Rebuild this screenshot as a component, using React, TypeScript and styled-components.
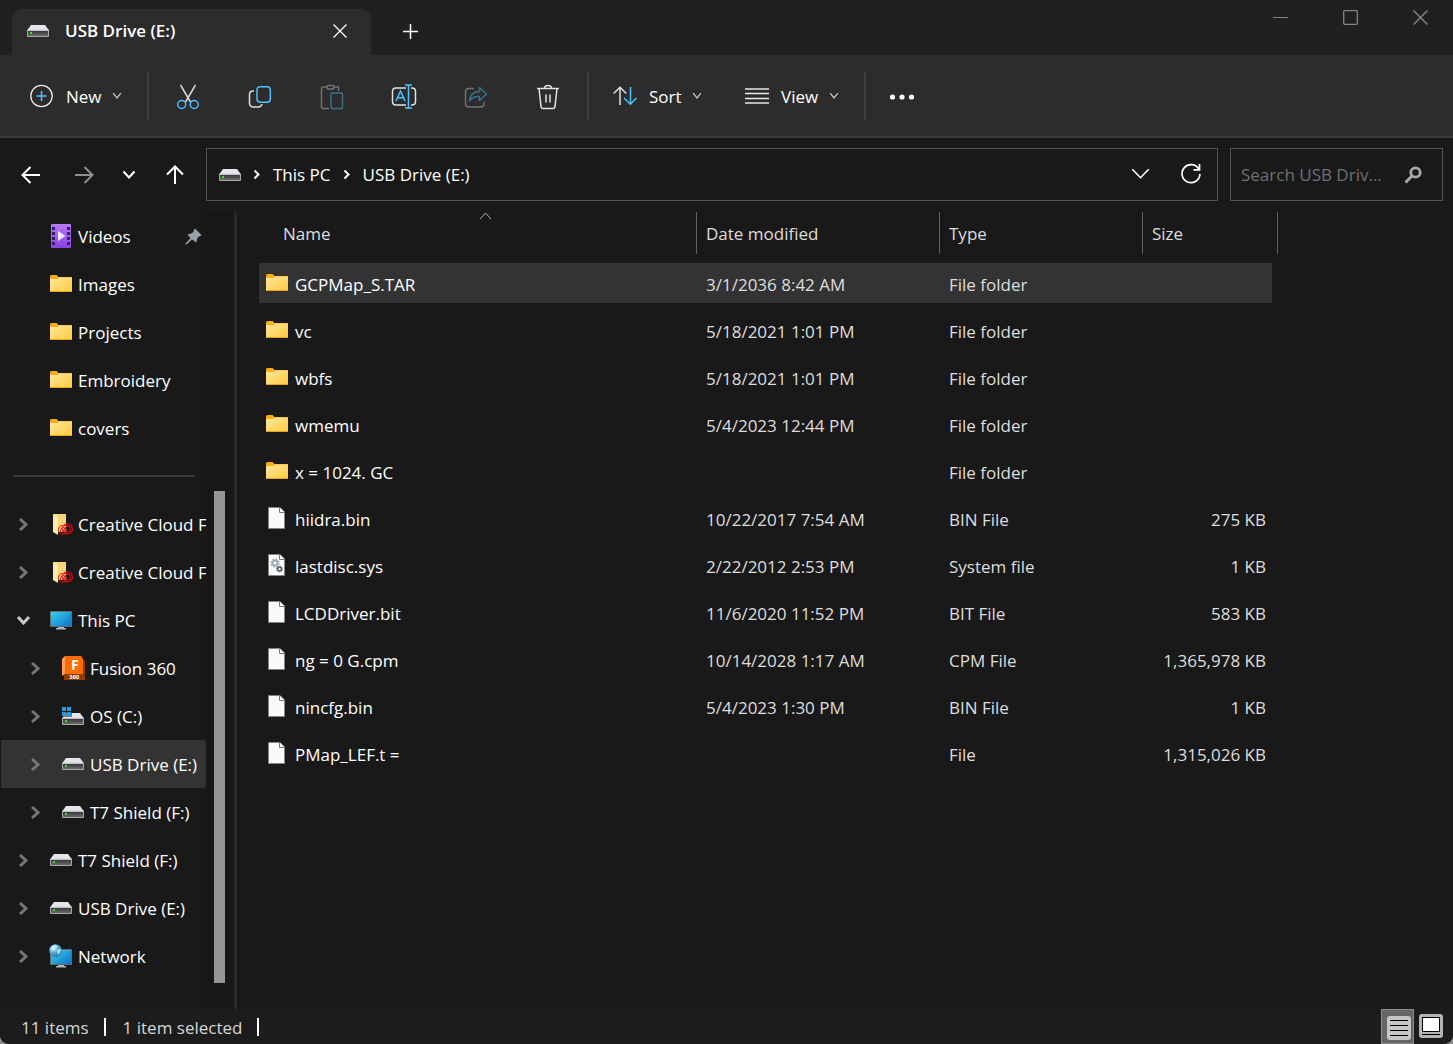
import React from "react";
import styled, { createGlobalStyle } from "styled-components";

const GlobalStyle = createGlobalStyle`
  *, *::before, *::after { box-sizing: border-box; }
  body {
    margin: 0;
    background: #8a8a8a;
    color: #ffffff;
    font: 400 17px/24px "Open Sans", "Noto Sans", sans-serif;
  }
  button, input { font: inherit; color: inherit; }
  button { border: 0; padding: 0; background: none; cursor: pointer; }
  svg { display: block; flex: none; }
`;

/* ---------- window frame ---------- */

const Window = styled.div`
  display: flex;
  flex-direction: column;
  min-height: 100vh;
  background: #191919;
  border-radius: 0 0 9px 9px;
  overflow: hidden;
`;

const TitleBar = styled.header`
  display: flex;
  align-items: flex-end;
  height: 55px;
  padding-left: 12px;
  background: #202020;
`;

const Tab = styled.div`
  display: flex;
  align-items: center;
  width: 359px;
  height: 46px;
  padding: 0 16px 2px 14px;
  gap: 15px;
  border-radius: 10px 10px 0 0;
  background: #2c2c2c;
`;

const TabTitle = styled.span`
  flex: 1;
  font-weight: 600;
`;

const TabButton = styled.button`
  display: grid;
  place-items: center;
  width: 30px;
  height: 30px;
`;

const NewTabButton = styled(TabButton)`
  width: 46px;
  height: 48px;
  margin-left: 16px;
`;

const WindowControls = styled.div`
  display: flex;
  align-self: flex-start;
  gap: 6px;
  margin-left: auto;
  padding-right: 1px;
  color: #848484;
`;

const ControlButton = styled.button`
  display: grid;
  place-items: center;
  width: 64px;
  height: 35px;
`;

/* ---------- command bar ---------- */

const Toolbar = styled.div`
  display: flex;
  align-items: center;
  height: 83px;
  padding-left: 30px;
  background: #2c2c2c;
  border-bottom: 2px solid #3c3c3c;
`;

const LabelButton = styled.button<{ $width: number }>`
  display: flex;
  align-items: center;
  justify-content: space-between;
  width: ${(p) => p.$width}px;
  height: 48px;
`;

const ButtonLabel = styled.span`
  flex: 1;
  padding: 2px 0 0 12px;
  text-align: left;
`;

const IconGroup = styled.div`
  display: flex;
  gap: 24px;
`;

const IconButton = styled.button`
  display: grid;
  place-items: center;
  width: 48px;
  height: 48px;
  padding-top: 2px;
  &:disabled { opacity: 0.45; cursor: default; }
`;

const Divider = styled.div<{ $before: number; $after: number }>`
  width: 2px;
  height: 48px;
  margin: 0 ${(p) => p.$after}px 0 ${(p) => p.$before}px;
  background: #3e3e3e;
`;

const ViewSlot = styled.div`
  margin-left: 43px;
`;

/* ---------- navigation row ---------- */

const NavBar = styled.nav`
  display: flex;
  padding: 10px 10px 11px 4px;
`;

const NavButtons = styled.div`
  display: grid;
  grid-template-columns: 53px 53px 37px 59px;
`;

const NavButton = styled.button`
  display: grid;
  place-items: center;
  height: 53px;
  &:disabled { color: #8f8f8f; }
  &:last-child { padding-right: 3px; }
`;

const AddressBar = styled.div`
  display: flex;
  align-items: center;
  flex: 1;
  height: 53px;
  padding: 0 3px 0 11px;
  border: 1px solid #535353;
`;

const Crumbs = styled.ol`
  display: flex;
  align-items: center;
  flex: 1;
  margin: 0;
  padding: 0 0 0 11px;
  list-style: none;
`;

const Crumb = styled.li`
  display: flex;
  align-items: center;
  gap: 13px;
  margin-right: 12px;
`;

const CrumbLink = styled.a`
  color: inherit;
  text-decoration: none;
`;

const AddressButton = styled.button`
  display: grid;
  place-items: center;
  width: 46px;
  height: 48px;
  margin-left: 5px;
  padding-bottom: 2px;
`;

const SearchBox = styled.label`
  display: flex;
  align-items: center;
  width: 213px;
  height: 53px;
  margin-left: 12px;
  padding: 0 20px 0 10px;
  border: 1px solid #535353;
`;

const SearchInput = styled.input`
  flex: 1;
  min-width: 0;
  padding: 0;
  border: 0;
  outline: 0;
  background: none;
  &::placeholder { color: #707070; opacity: 1; }
`;

/* ---------- body ---------- */

const Body = styled.div`
  display: flex;
  flex: 1;
`;

const Sidebar = styled.aside`
  display: flex;
  width: 237px;
  border-right: 3px solid #292929;
`;

const Tree = styled.ul`
  width: 206px;
  margin: 0;
  padding: 0 0 0 1px;
  list-style: none;
  overflow: hidden;
`;

const TreeRow = styled.button<{ $depth: number; $selected?: boolean }>`
  display: flex;
  align-items: center;
  width: 100%;
  height: 48px;
  padding: 0 4px 0 ${(p) => 10 + p.$depth * 12}px;
  background: ${(p) => (p.$selected ? "#333333" : "transparent")};
  border-radius: 2px;
  text-align: left;
  white-space: nowrap;
`;

const ExpanderSlot = styled.span`
  display: grid;
  flex: none;
  place-items: center;
  width: 24px;
  margin-right: 14px;
  color: #767676;
`;

const TreeIcon = styled.span`
  display: grid;
  flex: none;
  place-items: center;
  width: 24px;
  margin-right: 5px;
`;

const TreeLabel = styled.span`
  flex: 1;
  padding-top: 2px;
`;

const TreeDivider = styled.li`
  display: flex;
  align-items: center;
  height: 48px;
  padding: 0 11px 0 12px;
  &::before { content: ""; flex: 1; height: 2px; background: #3a3a3a; }
`;

const ScrollTrack = styled.div`
  display: grid;
  grid-template-rows: 279fr 492fr 26fr;
  width: 28px;
  padding-left: 8px;
  background: #171717;
`;

const ScrollThumb = styled.div`
  grid-row: 2;
  width: 11px;
  background: #959595;
`;

const Content = styled.main`
  flex: 1;
  min-width: 0;
  padding-left: 22px;
  overflow-x: auto;
`;

const FileTable = styled.table`
  width: 1019px;
  table-layout: fixed;
  border-collapse: separate;
  border-spacing: 0;
  color: #dedede;
`;

const HeadCell = styled.th`
  height: 48px;
  padding: 0;
  font-weight: 400;
  text-align: left;
  vertical-align: top;
`;

const HeadButton = styled.button<{ $indent: number }>`
  position: relative;
  display: flex;
  align-items: center;
  width: 100%;
  height: 42px;
  padding: 2px 0 0 ${(p) => p.$indent}px;
  border-right: 1px solid #636363;
`;

const SortMark = styled.span`
  position: absolute;
  top: 0;
  left: 220px;
`;

const Row = styled.tr<{ $selected?: boolean }>`
  & > td {
    background-color: ${(p) => (p.$selected ? "#333333" : "transparent")};
  }
`;

const Cell = styled.td`
  height: 47px;
  padding: 3px 0 0 9px;
  border: 0 solid transparent;
  border-width: 3px 0 4px;
  background-clip: padding-box;
  white-space: nowrap;
`;

const NameCell = styled(Cell)`
  padding: 0 0 0 6px;
  color: #ffffff;
`;

const SizeCell = styled(Cell)`
  border-right-width: 12px;
  border-right-width: 6px;
  padding-right: 6px;
  text-align: right;
`;

const FileEntryLine = styled.span`
  display: flex;
  align-items: center;
  gap: 6px;
`;

const FileName = styled.span`
  padding-top: 3px;
`;

/* ---------- status bar ---------- */

const StatusBar = styled.footer`
  display: flex;
  align-items: center;
  height: 35px;
  padding: 0 10px 0 21px;
  background: #1c1c1c;
  color: #d6d6d6;
`;

const StatusText = styled.span`
  position: relative;
  margin-right: 19px;
  padding: 2px 15px 0 0;
  &::after {
    content: "";
    position: absolute;
    right: -2px;
    top: 4px;
    width: 2px;
    height: 18px;
    background: #ffffff;
  }
`;

const ViewModes = styled.div`
  display: flex;
  align-items: center;
  gap: 5px;
  margin-left: auto;
`;

const ModeButton = styled.button<{ $active?: boolean }>`
  display: grid;
  place-items: center;
  width: ${(p) => (p.$active ? 33 : 24)}px;
  height: 35px;
  padding: ${(p) => (p.$active ? "2px 0 0 2px" : "0 0 2px")};
  background: ${(p) => (p.$active ? "#666666" : "none")};
  border: ${(p) => (p.$active ? "1px solid #8c8c8c" : "0")};
`;

/* ---------- icons ---------- */

const BLUE = "#4cc2ff";

type ChevronProps = { dir: "down" | "right" | "up"; w: number; h: number; stroke?: number; color?: string };
const Chevron = ({ dir, w, h, stroke = 2, color = "currentColor" }: ChevronProps) => {
  const s = stroke / 2 + 0.5;
  const d =
    dir === "down"
      ? `M${s} ${s}L${w / 2} ${h - s}L${w - s} ${s}`
      : dir === "up"
      ? `M${s} ${h - s}L${w / 2} ${s}L${w - s} ${h - s}`
      : `M${s} ${s}L${w - s} ${h / 2}L${s} ${h - s}`;
  return (
    <svg width={w} height={h} viewBox={`0 0 ${w} ${h}`} fill="none" stroke={color} strokeWidth={stroke}>
      <path d={d} />
    </svg>
  );
};

const DriveIcon = ({ os = false }: { os?: boolean }) => (
  <svg width="24" height={os ? 19 : 14} viewBox={os ? "0 -5 24 19" : "0 0 24 14"}>
    <defs>
      <linearGradient id="driveFront" x1="0" y1="0" x2="0" y2="1">
        <stop offset="0" stopColor="#333" />
        <stop offset="1" stopColor="#707070" />
      </linearGradient>
    </defs>
    <path d="M5 1H19L23 6.5H1Z" fill="#e6e6ea" />
    <path d="M1.5 6.5H22.5V12.5H1.5Z" fill="url(#driveFront)" stroke="#a8a8a8" />
    <path d="M1 6.3H23" stroke="#c8c8cc" />
    <path d="M4 8H6V10H4Z" fill="#2ee62e" />
    {os && (
      <>
        <path d="M0 -5H11V5H0Z" fill="#191919" opacity=".5" />
        <path d="M1 -5H5V-1H1ZM6 -5H10V-1H6ZM1 0H5V4H1ZM6 0H10V4H6Z" fill="#1c9be6" />
      </>
    )}
  </svg>
);

const FolderIcon = () => (
  <svg width="24" height="18" viewBox="0 0 24 18">
    <defs>
      <linearGradient id="folderFace" x1="0" y1="0" x2="1" y2="1">
        <stop offset="0" stopColor="#ffe9a2" />
        <stop offset="1" stopColor="#ffc83a" />
      </linearGradient>
    </defs>
    <path d="M1 1.5Q1 0 2.500 0H7.500L9.500 2H23V8H1Z" fill="#fbb012" />
    <path d="M1 4H8L10 2.500H23V17H1Z" fill="url(#folderFace)" />
    <path d="M1 16.500H23" stroke="#e9a21c" />
  </svg>
);

const FileIcon = ({ gears = false }: { gears?: boolean }) => (
  <svg width="24" height="24" viewBox="0 0 24 24">
    <path d="M3.500 1.500H15L19.500 6V22.500H3.500Z" fill="#fafafa" stroke="#858585" />
    <path d="M14.500 1.500V6.500H19.500" fill="#fff" stroke="#777" />
    {gears && (
      <g fill="none">
        <circle cx="10" cy="10" r="2.500" stroke="#a2abb4" strokeWidth="2" />
        <circle cx="10" cy="10" r="4" stroke="#a2abb4" strokeWidth="1.500" strokeDasharray="1.600 1.540" />
        <circle cx="14.500" cy="16" r="2" stroke="#4d555c" strokeWidth="1.500" />
        <circle cx="14.500" cy="16" r="3" stroke="#6a737b" strokeDasharray="1.200 1.150" />
      </g>
    )}
  </svg>
);

const VideosIcon = () => (
  <svg width="20" height="24" viewBox="0 0 20 24">
    <defs>
      <linearGradient id="videoFace" x1="0" y1="0" x2="0" y2="1">
        <stop offset="0" stopColor="#b57bf5" />
        <stop offset="1" stopColor="#8a42e0" />
      </linearGradient>
      <linearGradient id="videoPlay" x1="0" y1="0" x2="1" y2="1">
        <stop offset="0" stopColor="#fff" />
        <stop offset="1" stopColor="#dcc8f5" />
      </linearGradient>
    </defs>
    <rect width="20" height="24" rx="1" fill="url(#videoFace)" />
    <path d="M1 3h3v3H1zM1 8h3v3H1zM1 13h3v3H1zM1 18h3v3H1zM16 3h3v3h-3zM16 8h3v3h-3zM16 13h3v3h-3zM16 18h3v3h-3z" fill="#3b1a66" />
    <path d="M7 7L14.500 12L7 17Z" fill="url(#videoPlay)" />
  </svg>
);

const CloudFolderIcon = () => (
  <svg width="24" height="24" viewBox="0 0 24 24">
    <path d="M4 2H17V20H7Z" fill="#f7d477" />
    <path d="M4 2L9 5V23L4 20Z" fill="#ffe9ab" />
    <g fill="none" stroke="#d01212">
      <rect x="9.500" y="13.500" width="14" height="8.500" rx="4.200" />
      <circle cx="18.500" cy="16.500" r="5" />
      <circle cx="18.500" cy="17" r="2.800" />
      <path d="M11.500 20Q11.500 15.500 14.500 15.500Q17.500 16 18.500 20M13.500 21Q13 18 15 18L17 21" />
    </g>
  </svg>
);

const MonitorIcon = ({ globe = false }: { globe?: boolean }) => (
  <svg width="24" height={globe ? 24 : 20} viewBox={globe ? "0 -4 24 24" : "0 0 24 20"}>
    <defs>
      <linearGradient id="screenFace" x1="0" y1="0" x2="1" y2="1">
        <stop offset="0" stopColor="#39d5e6" />
        <stop offset="1" stopColor="#0d6fcb" />
      </linearGradient>
      <radialGradient id="globeFace" cx=".35" cy=".3" r=".8">
        <stop offset="0" stopColor="#c8ecfa" />
        <stop offset=".5" stopColor="#58a9d4" />
        <stop offset="1" stopColor="#1d5f92" />
      </radialGradient>
    </defs>
    <path d="M1.500 1.500H22.500V16.500H1.500Z" fill="url(#screenFace)" stroke="#5e6a74" />
    <path d="M9 17H15V18H17V19.500H7V18H9Z" fill="#b0b7bc" />
    {globe && (
      <>
        <circle cx="6.500" cy="2.500" r="6.300" fill="url(#globeFace)" />
        <path d="M2 0Q4 -3 7 -3L8 -1L5 2L3 3ZM8 2L12 1Q12 5 9 7Z" fill="#d3f0fa" opacity=".75" />
      </>
    )}
  </svg>
);

const FusionText = styled.text`
  font-family: "Open Sans", sans-serif;
  font-weight: 700;
  fill: #ffffff;
`;

const FusionIcon = () => (
  <svg width="24" height="24" viewBox="0 0 24 24">
    <path d="M1 3L4 0V18L1 20Z" fill="#ff9a57" />
    <path d="M4 0H20L22 3V18H4Z" fill="#ff6b00" />
    <path d="M22 3L24 5V24H3V18H22Z" fill="#8f3b00" />
    <FusionText x="10" y="14" fontSize="14">F</FusionText>
    <FusionText x="8" y="23" fontSize="6">360</FusionText>
  </svg>
);

const PinIcon = () => (
  <svg width="17" height="17" viewBox="0 0 17 17" fill="#98a1a9">
    <path d="M10 0.500L16.500 7L14.500 8.500L13 9L12 11.500L11.500 14.500L7 11.500L1.500 16.500L0 16L5.500 10.200L2.500 6.500L6 5.500L8.500 4L8.700 2Z" />
  </svg>
);

const AddIcon = () => (
  <svg width="24" height="24" viewBox="0 0 24 24" fill="none" strokeWidth="1.500">
    <circle cx="11.500" cy="12" r="10.700" stroke="#e8e8e8" strokeWidth="1.300" />
    <path d="M11.500 7V17M6.500 12H16.500" stroke={BLUE} />
  </svg>
);

const CutIcon = () => (
  <svg width="24" height="26" viewBox="0 0 24 26" fill="none" strokeWidth="1.500">
    <path d="M4.500 1L14.500 18M19.500 1L9.500 18" stroke="#d8d8d8" />
    <circle cx="5.700" cy="20.500" r="4" stroke={BLUE} />
    <circle cx="18.200" cy="20.500" r="4" stroke={BLUE} />
  </svg>
);

const CopyIcon = () => (
  <svg width="24" height="24" viewBox="0 0 24 24" fill="none" strokeWidth="1.500">
    <path d="M6 6H5Q1.500 6 1.500 9.500V18Q1.500 22 5.500 22H10Q13.500 22 14 19" stroke="#e0e0e0" />
    <rect x="9" y="1.800" width="13.300" height="15.400" rx="3.200" stroke={BLUE} />
  </svg>
);

const PasteIcon = () => (
  <svg width="24" height="26" viewBox="0 0 24 26" fill="none" strokeWidth="1.500">
    <path d="M7 3H2.500Q1.500 3 1.500 4V23Q1.500 24.500 3 24.500H9M14 3H18.500V7" stroke="#c8c8c8" />
    <rect x="7" y="1.500" width="7" height="3.500" rx="1.500" stroke="#c8c8c8" />
    <rect x="11" y="9" width="11.500" height="15.500" rx="1.500" stroke={BLUE} />
  </svg>
);

const RenameIcon = () => (
  <svg width="26" height="26" viewBox="0 0 26 26" fill="none" strokeWidth="1.500">
    <path d="M15 4H5Q1.500 4 1.500 7.500V17.500Q1.500 21 5 21H15M20 4H21Q24.500 4 24.500 7.500V17.500Q24.500 21 21 21H20" stroke="#e0e0e0" />
    <path d="M5 17L9.500 7L14 17M6.500 13.800H12.500M14 1H21M17.500 1V24M14 24H21" stroke={BLUE} />
  </svg>
);

const ShareIcon = () => (
  <svg width="24" height="24" viewBox="0 0 24 24" fill="none" strokeWidth="1.500" strokeLinejoin="round">
    <path d="M10 3.500H5Q1.500 3.500 1.500 7V18.500Q1.500 22 5 22H16.500Q20 22 20 18.500V17" stroke="#c8c8c8" />
    <path d="M15.500 2.500L22.500 9L15.500 15.500V11.500Q9 11 5.500 16Q6 7 15.500 6.500Z" stroke={BLUE} />
  </svg>
);

const TrashIcon = () => (
  <svg width="24" height="26" viewBox="0 0 24 26" fill="none" stroke="#e4e4e4" strokeWidth="1.500">
    <path d="M1 4.500H23M8.500 4.500Q8.500 1.500 12 1.500Q15.500 1.500 15.500 4.500M3 4.500L5 22.500Q5.200 24.500 7 24.500H17Q18.800 24.500 19 22.500L21 4.500M10 10.500V18.500M14 10.500V18.500" />
  </svg>
);

const SortIcon = () => (
  <svg width="24" height="20" viewBox="0 0 24 20" fill="none" strokeWidth="1.500">
    <path d="M7 19V1.500M0.600 7.500L7 1.300L13.300 7.500" stroke="#e0e0e0" />
    <path d="M17.500 1V18M11 12L17.400 18.300L23.500 12" stroke={BLUE} />
  </svg>
);

const LinesIcon = () => (
  <svg width="24" height="18" viewBox="0 0 24 18" stroke="#e8e8e8" strokeWidth="1.400">
    <path d="M0 2H24M0 6.500H24M0 11.500H24M0 16H24" />
  </svg>
);

const MoreIcon = () => (
  <svg width="26" height="6" viewBox="0 0 26 6" fill="#fff">
    <circle cx="3.500" cy="3" r="2.600" />
    <circle cx="13" cy="3" r="2.600" />
    <circle cx="22.500" cy="3" r="2.600" />
  </svg>
);

const ArrowIcon = ({ turn }: { turn: number }) => (
  <svg width="20" height="20" viewBox="0 0 20 20" fill="none" stroke="currentColor" strokeWidth="2">
    <path d="M19 10H2M9.500 2L1.500 10L9.500 18" transform={`rotate(${turn} 10 10)`} />
  </svg>
);

const RefreshIcon = () => (
  <svg width="22" height="22" viewBox="0 0 22 22" fill="none" stroke="#fff" strokeWidth="1.700">
    <path d="M19 6.500A9 9 0 1 0 20 11" />
    <path d="M19.500 1V6.800H13.500" />
  </svg>
);

const SearchIcon = () => (
  <svg width="18" height="18" viewBox="0 0 18 18" fill="none" stroke="#a8a8a8">
    <circle cx="11.500" cy="6.500" r="4.700" strokeWidth="2.800" />
    <path d="M8 10L1.500 16.500" strokeWidth="3" />
  </svg>
);

const CrossIcon = ({ size }: { size: number }) => (
  <svg width={size} height={size} viewBox="0 0 14 14" stroke="currentColor" strokeWidth="1.300">
    <path d="M0.500 0.500L13.500 13.500M13.500 0.500L0.500 13.500" />
  </svg>
);

const DetailsIcon = () => (
  <svg width="24" height="24" viewBox="0 0 24 24">
    <rect width="24" height="24" rx="3" fill="#c6c6c6" />
    <path d="M3 4.500H21M3 9.500H21M3 14.500H21M3 19.500H21" stroke="#000" />
  </svg>
);

const ThumbsIcon = () => (
  <svg width="24" height="24" viewBox="0 0 24 24">
    <rect width="24" height="24" rx="3" fill="#b4b4b4" />
    <rect x="3.500" y="3.500" width="17" height="14" fill="#fff" stroke="#000" />
    <path d="M3 20.500H21" stroke="#000" />
  </svg>
);

/* ---------- data ---------- */

type TreeNode = {
  label: string;
  icon: React.ReactNode;
  depth?: number;
  expander?: "closed" | "open";
  pinned?: boolean;
  selected?: boolean;
};

const quickAccess: TreeNode[] = [
  { label: "Videos", icon: <VideosIcon />, pinned: true },
  { label: "Images", icon: <FolderIcon /> },
  { label: "Projects", icon: <FolderIcon /> },
  { label: "Embroidery", icon: <FolderIcon /> },
  { label: "covers", icon: <FolderIcon /> },
];

const locations: TreeNode[] = [
  { label: "Creative Cloud F", icon: <CloudFolderIcon />, expander: "closed" },
  { label: "Creative Cloud F", icon: <CloudFolderIcon />, expander: "closed" },
  { label: "This PC", icon: <MonitorIcon />, expander: "open" },
  { label: "Fusion 360", icon: <FusionIcon />, depth: 1, expander: "closed" },
  { label: "OS (C:)", icon: <DriveIcon os />, depth: 1, expander: "closed" },
  { label: "USB Drive (E:)", icon: <DriveIcon />, depth: 1, expander: "closed", selected: true },
  { label: "T7 Shield (F:)", icon: <DriveIcon />, depth: 1, expander: "closed" },
  { label: "T7 Shield (F:)", icon: <DriveIcon />, expander: "closed" },
  { label: "USB Drive (E:)", icon: <DriveIcon />, expander: "closed" },
  { label: "Network", icon: <MonitorIcon globe />, expander: "closed" },
];

type FileEntry = { name: string; date: string; type: string; size?: string; kind: "folder" | "file" | "system" };

const files: FileEntry[] = [
  { name: "GCPMap_S.TAR", date: "3/1/2036 8:42 AM", type: "File folder", kind: "folder" },
  { name: "vc", date: "5/18/2021 1:01 PM", type: "File folder", kind: "folder" },
  { name: "wbfs", date: "5/18/2021 1:01 PM", type: "File folder", kind: "folder" },
  { name: "wmemu", date: "5/4/2023 12:44 PM", type: "File folder", kind: "folder" },
  { name: "x = 1024. GC", date: "", type: "File folder", kind: "folder" },
  { name: "hiidra.bin", date: "10/22/2017 7:54 AM", type: "BIN File", size: "275 KB", kind: "file" },
  { name: "lastdisc.sys", date: "2/22/2012 2:53 PM", type: "System file", size: "1 KB", kind: "system" },
  { name: "LCDDriver.bit", date: "11/6/2020 11:52 PM", type: "BIT File", size: "583 KB", kind: "file" },
  { name: "ng = 0 G.cpm", date: "10/14/2028 1:17 AM", type: "CPM File", size: "1,365,978 KB", kind: "file" },
  { name: "nincfg.bin", date: "5/4/2023 1:30 PM", type: "BIN File", size: "1 KB", kind: "file" },
  { name: "PMap_LEF.t =", date: "", type: "File", size: "1,315,026 KB", kind: "file" },
];

const columns = [
  { label: "Name", width: 438, indent: 24 },
  { label: "Date modified", width: 243, indent: 9 },
  { label: "Type", width: 203, indent: 9 },
  { label: "Size", width: 135, indent: 9 },
];

const TreeItem = ({ node }: { node: TreeNode }) => (
  <li>
    <TreeRow $depth={node.depth ?? 0} $selected={node.selected}>
      <ExpanderSlot>
        {node.expander === "closed" && <Chevron dir="right" w={10} h={15} stroke={3} />}
        {node.expander === "open" && <Chevron dir="down" w={15} h={10} stroke={3} color="#c8c8c8" />}
      </ExpanderSlot>
      <TreeIcon>{node.icon}</TreeIcon>
      <TreeLabel>{node.label}</TreeLabel>
      {node.pinned && <PinIcon />}
    </TreeRow>
  </li>
);

const MenuChevron = () => <Chevron dir="down" w={10} h={7} stroke={1.3} color="#c8c8c8" />;

export default function App() {
  return (
    <Window>
      <GlobalStyle />
      <TitleBar>
        <Tab>
          <DriveIcon />
          <TabTitle>USB Drive (E:)</TabTitle>
          <TabButton aria-label="Close tab"><CrossIcon size={14} /></TabButton>
        </Tab>
        <NewTabButton aria-label="New tab">
          <svg width="15" height="15" viewBox="0 0 15 15" stroke="#fff" strokeWidth="1.500">
            <path d="M7.500 0V15M0 7.500H15" />
          </svg>
        </NewTabButton>
        <WindowControls>
          <ControlButton aria-label="Minimize">
            <svg width="15" height="15" viewBox="0 0 15 15" stroke="currentColor"><path d="M0 7.500H15" /></svg>
          </ControlButton>
          <ControlButton aria-label="Maximize">
            <svg width="15" height="15" viewBox="0 0 15 15" fill="none" stroke="currentColor" strokeWidth="1.300">
              <rect x=".7" y=".7" width="13.600" height="13.600" rx="1" />
            </svg>
          </ControlButton>
          <ControlButton aria-label="Close"><CrossIcon size={15} /></ControlButton>
        </WindowControls>
      </TitleBar>

      <Toolbar>
        <LabelButton $width={92}>
          <AddIcon />
          <ButtonLabel>New</ButtonLabel>
          <MenuChevron />
        </LabelButton>
        <Divider $before={25} $after={15} />
        <IconGroup>
          <IconButton aria-label="Cut"><CutIcon /></IconButton>
          <IconButton aria-label="Copy"><CopyIcon /></IconButton>
          <IconButton aria-label="Paste" disabled><PasteIcon /></IconButton>
          <IconButton aria-label="Rename"><RenameIcon /></IconButton>
          <IconButton aria-label="Share" disabled><ShareIcon /></IconButton>
          <IconButton aria-label="Delete"><TrashIcon /></IconButton>
        </IconGroup>
        <Divider $before={15} $after={24} />
        <LabelButton $width={89}>
          <SortIcon />
          <ButtonLabel>Sort</ButtonLabel>
          <MenuChevron />
        </LabelButton>
        <ViewSlot>
          <LabelButton $width={94}>
            <LinesIcon />
            <ButtonLabel>View</ButtonLabel>
            <MenuChevron />
          </LabelButton>
        </ViewSlot>
        <Divider $before={25} $after={12} />
        <IconButton aria-label="See more"><MoreIcon /></IconButton>
      </Toolbar>

      <NavBar>
        <NavButtons>
          <NavButton aria-label="Back"><ArrowIcon turn={0} /></NavButton>
          <NavButton aria-label="Forward" disabled><ArrowIcon turn={180} /></NavButton>
          <NavButton aria-label="Recent locations"><Chevron dir="down" w={14} h={9} stroke={2} /></NavButton>
          <NavButton aria-label="Up"><ArrowIcon turn={90} /></NavButton>
        </NavButtons>
        <AddressBar>
          <DriveIcon />
          <Crumbs>
            <Crumb><Chevron dir="right" w={7} h={11} stroke={2} /><CrumbLink href="#this-pc">This PC</CrumbLink></Crumb>
            <Crumb><Chevron dir="right" w={7} h={11} stroke={2} /><CrumbLink href="#usb-drive">USB Drive (E:)</CrumbLink></Crumb>
          </Crumbs>
          <AddressButton aria-label="Previous locations"><Chevron dir="down" w={19} h={11} stroke={1.6} /></AddressButton>
          <AddressButton aria-label="Refresh"><RefreshIcon /></AddressButton>
        </AddressBar>
        <SearchBox>
          <SearchInput type="text" aria-label="Search USB Drive" placeholder="Search USB Driv..." />
          <SearchIcon />
        </SearchBox>
      </NavBar>

      <Body>
        <Sidebar>
          <Tree>
            {quickAccess.map((n) => <TreeItem key={n.label} node={n} />)}
            <TreeDivider role="separator" />
            {locations.map((n, i) => <TreeItem key={i} node={n} />)}
          </Tree>
          <ScrollTrack><ScrollThumb /></ScrollTrack>
        </Sidebar>
        <Content>
          <FileTable>
            <colgroup>
              {columns.map((c) => <col key={c.label} width={c.width} />)}
            </colgroup>
            <thead>
              <tr>
                {columns.map((c) => (
                  <HeadCell key={c.label} scope="col">
                    <HeadButton $indent={c.indent}>
                      {c.label}
                      {c.label === "Name" && (
                        <SortMark><Chevron dir="up" w={13} h={8} stroke={1} color="#b0b0b0" /></SortMark>
                      )}
                    </HeadButton>
                  </HeadCell>
                ))}
              </tr>
            </thead>
            <tbody>
              {files.map((f, i) => (
                <Row key={f.name} $selected={i === 0}>
                  <NameCell>
                    <FileEntryLine>
                      {f.kind === "folder" ? <FolderIcon /> : <FileIcon gears={f.kind === "system"} />}
                      <FileName>{f.name}</FileName>
                    </FileEntryLine>
                  </NameCell>
                  <Cell>{f.date}</Cell>
                  <Cell>{f.type}</Cell>
                  <SizeCell>{f.size}</SizeCell>
                </Row>
              ))}
            </tbody>
          </FileTable>
        </Content>
      </Body>

      <StatusBar>
        <StatusText>11 items</StatusText>
        <StatusText>1 item selected</StatusText>
        <ViewModes>
          <ModeButton $active aria-label="Details view"><DetailsIcon /></ModeButton>
          <ModeButton aria-label="Large thumbnails"><ThumbsIcon /></ModeButton>
        </ViewModes>
      </StatusBar>
    </Window>
  );
}
